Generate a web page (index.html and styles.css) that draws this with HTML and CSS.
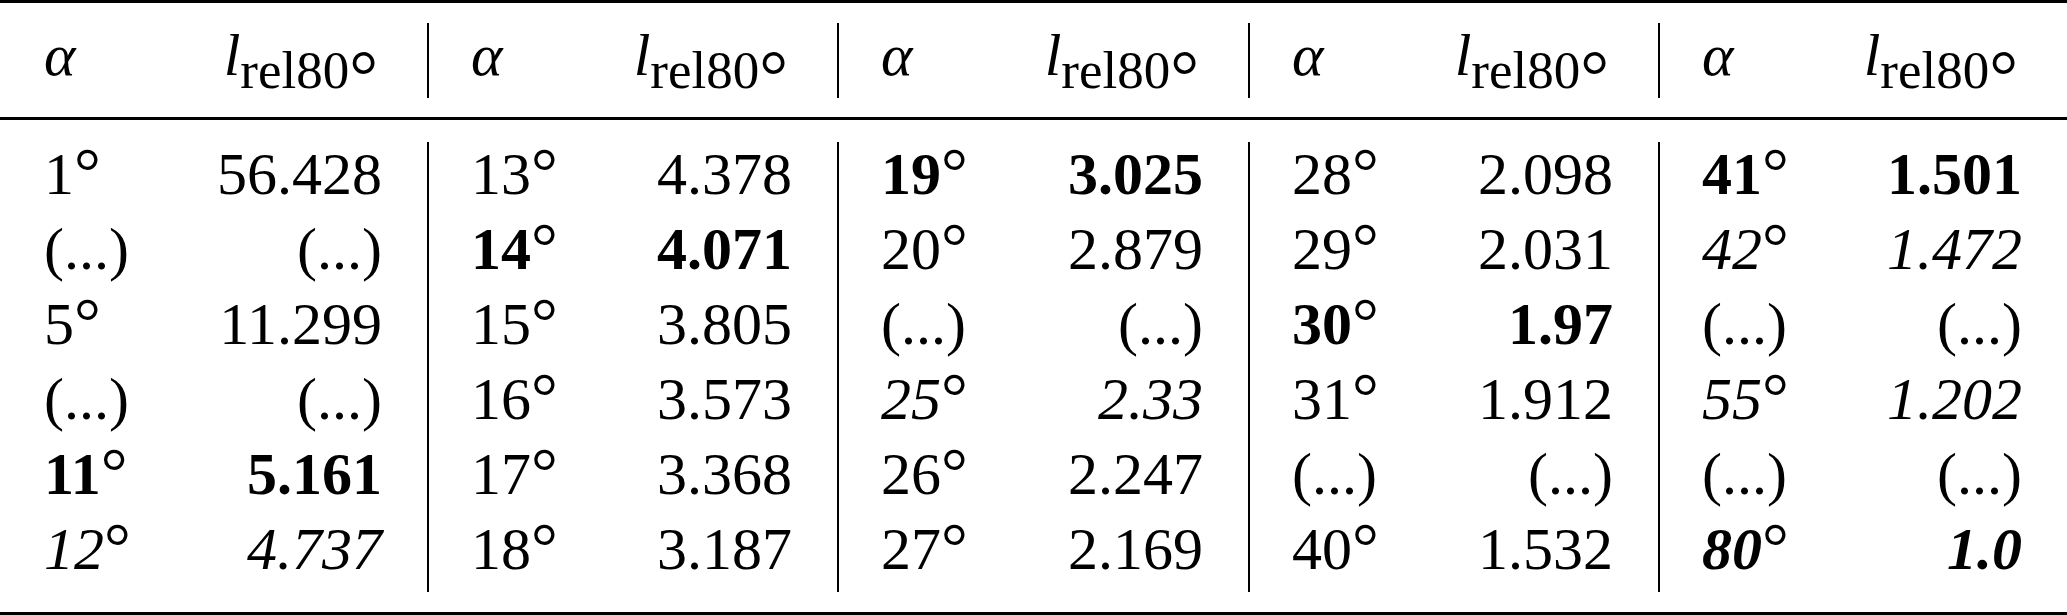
FILE: index.html
```html
<!DOCTYPE html>
<html>
<head>
<meta charset="utf-8">
<link rel="stylesheet" href="styles.css">
</head>
<body>
<table class="t">
  <colgroup>
    <col class="w173"><col class="w254">
    <col class="w174"><col class="w236">
    <col class="w174"><col class="w237">
    <col class="w174"><col class="w236">
    <col class="w174"><col class="w235">
  </colgroup>
  <thead>
    <tr>
      <th class="a"><div class="c"><i>α</i></div></th>
      <th class="v"><div class="c"><i>l</i><span class="sub">rel80<span class="hdeg">°</span></span></div></th>
      <th class="a g"><div class="c"><i>α</i></div></th>
      <th class="v"><div class="c"><i>l</i><span class="sub">rel80<span class="hdeg">°</span></span></div></th>
      <th class="a g"><div class="c"><i>α</i></div></th>
      <th class="v"><div class="c"><i>l</i><span class="sub">rel80<span class="hdeg">°</span></span></div></th>
      <th class="a g"><div class="c"><i>α</i></div></th>
      <th class="v"><div class="c"><i>l</i><span class="sub">rel80<span class="hdeg">°</span></span></div></th>
      <th class="a g"><div class="c"><i>α</i></div></th>
      <th class="v"><div class="c"><i>l</i><span class="sub">rel80<span class="hdeg">°</span></span></div></th>
    </tr>
  </thead>
  <tbody>
    <tr>
      <td class="a"><div class="c">1<span class="d">°</span></div></td>
      <td class="v"><div class="c">56.428</div></td>
      <td class="a g"><div class="c">13<span class="d">°</span></div></td>
      <td class="v"><div class="c">4.378</div></td>
      <td class="a g"><div class="c"><b>19<span class="d">°</span></b></div></td>
      <td class="v"><div class="c"><b>3.025</b></div></td>
      <td class="a g"><div class="c">28<span class="d">°</span></div></td>
      <td class="v"><div class="c">2.098</div></td>
      <td class="a g"><div class="c"><b>41<span class="d">°</span></b></div></td>
      <td class="v"><div class="c"><b>1.501</b></div></td>
    </tr>
    <tr>
      <td class="a"><div class="c">(...)</div></td>
      <td class="v"><div class="c">(...)</div></td>
      <td class="a g"><div class="c"><b>14<span class="d">°</span></b></div></td>
      <td class="v"><div class="c"><b>4.071</b></div></td>
      <td class="a g"><div class="c">20<span class="d">°</span></div></td>
      <td class="v"><div class="c">2.879</div></td>
      <td class="a g"><div class="c">29<span class="d">°</span></div></td>
      <td class="v"><div class="c">2.031</div></td>
      <td class="a g"><div class="c"><i>42</i><span class="d">°</span></div></td>
      <td class="v"><div class="c"><i>1.472</i></div></td>
    </tr>
    <tr>
      <td class="a"><div class="c">5<span class="d">°</span></div></td>
      <td class="v"><div class="c">11.299</div></td>
      <td class="a g"><div class="c">15<span class="d">°</span></div></td>
      <td class="v"><div class="c">3.805</div></td>
      <td class="a g"><div class="c">(...)</div></td>
      <td class="v"><div class="c">(...)</div></td>
      <td class="a g"><div class="c"><b>30<span class="d">°</span></b></div></td>
      <td class="v"><div class="c"><b>1.97</b></div></td>
      <td class="a g"><div class="c">(...)</div></td>
      <td class="v"><div class="c">(...)</div></td>
    </tr>
    <tr>
      <td class="a"><div class="c">(...)</div></td>
      <td class="v"><div class="c">(...)</div></td>
      <td class="a g"><div class="c">16<span class="d">°</span></div></td>
      <td class="v"><div class="c">3.573</div></td>
      <td class="a g"><div class="c"><i>25</i><span class="d">°</span></div></td>
      <td class="v"><div class="c"><i>2.33</i></div></td>
      <td class="a g"><div class="c">31<span class="d">°</span></div></td>
      <td class="v"><div class="c">1.912</div></td>
      <td class="a g"><div class="c"><i>55</i><span class="d">°</span></div></td>
      <td class="v"><div class="c"><i>1.202</i></div></td>
    </tr>
    <tr>
      <td class="a"><div class="c"><b>11<span class="d">°</span></b></div></td>
      <td class="v"><div class="c"><b>5.161</b></div></td>
      <td class="a g"><div class="c">17<span class="d">°</span></div></td>
      <td class="v"><div class="c">3.368</div></td>
      <td class="a g"><div class="c">26<span class="d">°</span></div></td>
      <td class="v"><div class="c">2.247</div></td>
      <td class="a g"><div class="c">(...)</div></td>
      <td class="v"><div class="c">(...)</div></td>
      <td class="a g"><div class="c">(...)</div></td>
      <td class="v"><div class="c">(...)</div></td>
    </tr>
    <tr>
      <td class="a"><div class="c"><i>12</i><span class="d">°</span></div></td>
      <td class="v"><div class="c"><i>4.737</i></div></td>
      <td class="a g"><div class="c">18<span class="d">°</span></div></td>
      <td class="v"><div class="c">3.187</div></td>
      <td class="a g"><div class="c">27<span class="d">°</span></div></td>
      <td class="v"><div class="c">2.169</div></td>
      <td class="a g"><div class="c">40<span class="d">°</span></div></td>
      <td class="v"><div class="c">1.532</div></td>
      <td class="a g"><div class="c"><b><i>80</i><span class="d">°</span></b></div></td>
      <td class="v"><div class="c"><b><i>1.0</i></b></div></td>
    </tr>
  </tbody>
</table>
</body>
</html>
```

FILE: styles.css
```css
html, body {
  margin: 0;
  padding: 0;
  background: #fff;
}

.t {
  border-collapse: separate;
  border-spacing: 0;
  table-layout: fixed;
  width: 2067px;
  border-top: 3px solid #000;
  border-bottom: 3px solid #000;
  font-family: "Liberation Serif", "Times New Roman", serif;
  font-size: 60px;
  color: #000;
}

.w173 { width: 173px; }
.w174 { width: 174px; }
.w235 { width: 235px; }
.w236 { width: 236px; }
.w237 { width: 237px; }
.w254 { width: 254px; }

.t th,
.t td {
  padding: 0;
  font-weight: normal;
  white-space: nowrap;
}

.t th {
  padding-top: 20px;
  padding-bottom: 19px;
  border-bottom: 3px solid #000;
}

.t tbody tr:first-child td { padding-top: 22px; }
.t tbody tr:last-child td { padding-bottom: 20px; }

.c {
  height: 75px;
  line-height: 64px;
  box-sizing: border-box;
}

.a { text-align: left; }
.a .c { padding-left: 44px; }
.v { text-align: right; }
.v .c { padding-right: 45px; }
th.v .c { padding-right: 49px; }

.g .c {
  border-left: 2px solid #000;
  padding-left: 42px;
}

b { font-weight: bold; }

/* degree ring, drawn a little larger like a math \circ */
.d {
  font-size: 67px;
  font-weight: normal;
  font-style: normal;
  line-height: 0;
  vertical-align: -1px;
}

.sub {
  font-size: 53px;
  vertical-align: -13px;
  line-height: 0;
}

.hdeg {
  font-size: 72px;
  line-height: 0;
  vertical-align: -12px;
}
```
